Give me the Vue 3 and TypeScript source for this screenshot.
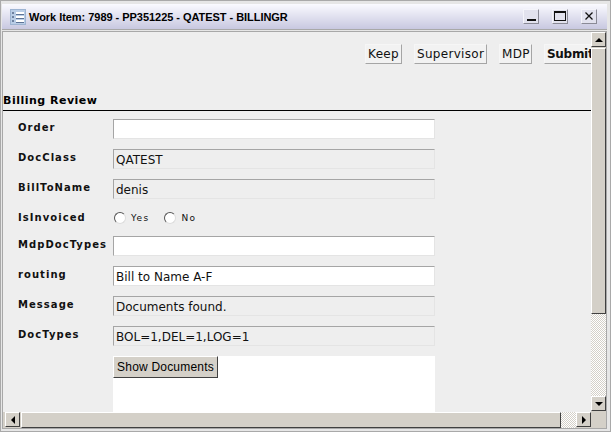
<script setup lang="ts">
// Work item window: billing review form
interface Field {
  label: string
  value?: string
  kind: 'input' | 'readonly' | 'radio'
}

const fields: Field[] = [
  { label: 'Order', value: '', kind: 'input' },
  { label: 'DocClass', value: 'QATEST', kind: 'readonly' },
  { label: 'BillToName', value: 'denis', kind: 'readonly' },
  { label: 'IsInvoiced', kind: 'radio' },
  { label: 'MdpDocTypes', value: '', kind: 'input' },
  { label: 'routing', value: 'Bill to Name A-F', kind: 'input' },
  { label: 'Message', value: 'Documents found.', kind: 'readonly' },
  { label: 'DocTypes', value: 'BOL=1,DEL=1,LOG=1', kind: 'readonly' },
]

const actions = [
  { name: 'Keep', width: 37 },
  { name: 'Supervisor', width: 73 },
  { name: 'MDP', width: 33 },
]
</script>

<template>
  <div class="window">
    <div class="titlebar">
      <svg class="app-icon" width="16" height="16" viewBox="0 0 16 16">
        <rect x="0.5" y="0.5" width="15" height="15" fill="#b9cde6" stroke="#9db4d2" />
        <path d="M2 4h2M2 8h2M2 12h2" stroke="#22365a" stroke-width="1" />
        <path d="M6 4h8M6 8h8M6 12h8" stroke="#ffffff" stroke-width="2" />
        <path d="M6 5.5h8M6 9.5h8M6 13.5h8" stroke="#5d7396" stroke-width="1" />
      </svg>
      <span class="title">Work Item: 7989 - PP351225 - QATEST - BILLINGR</span>
      <div class="win-buttons">
        <button class="win-btn">
          <svg width="14" height="13" viewBox="0 0 14 13"><rect x="3" y="9" width="9" height="2" fill="#111" /></svg>
        </button>
        <button class="win-btn">
          <svg width="14" height="13" viewBox="0 0 14 13"><rect x="1.5" y="1.5" width="11" height="9" fill="none" stroke="#111" /><rect x="1" y="1" width="12" height="2" fill="#111" /></svg>
        </button>
        <button class="win-btn">
          <svg width="14" height="13" viewBox="0 0 14 13"><path d="M3.5 2.5l7 7M10.5 2.5l-7 7" stroke="#111" stroke-width="1.3" fill="none" /></svg>
        </button>
      </div>
    </div>

    <div class="body">
      <div class="viewport">
        <div class="toolbar">
          <button v-for="a in actions" :key="a.name" class="action" :style="{ width: a.width + 'px' }">{{ a.name }}</button>
          <button class="action submit">Submit</button>
        </div>
        <h2 class="section">Billing Review</h2>
        <div class="form">
          <div v-for="f in fields" :key="f.label" class="row" :class="{ 'radio-row': f.kind === 'radio' }">
            <label class="label">{{ f.label }}</label>
            <div v-if="f.kind === 'radio'" class="radios">
              <span class="radio-item"><i class="radio"></i>Yes</span>
              <span class="radio-item"><i class="radio"></i>No</span>
            </div>
            <div v-else class="field" :class="f.kind">{{ f.value }}</div>
          </div>
          <div class="docs">
            <button class="show-docs">Show Documents</button>
          </div>
        </div>
      </div>

      <div class="vscroll">
        <button class="arrow"><span class="tri up"></span></button>
        <div class="vthumb"></div>
        <div class="track"></div>
        <button class="arrow"><span class="tri down"></span></button>
      </div>

      <div class="hscroll">
        <button class="arrow first"><span class="tri left"></span></button>
        <div class="hthumb"></div>
        <div class="track"></div>
        <button class="arrow"><span class="tri right"></span></button>
      </div>
      <div class="corner"></div>
    </div>
  </div>
</template>

<style>
html,
body {
  margin: 0;
  background: #d4d0c8;
}
</style>

<style scoped>
.window {
  width: 611px;
  height: 432px;
  box-sizing: border-box;
  padding: 3px 3px 2px 1px;
  background: #e6e6e6;
  border: 1px solid #a9a9a9;
  display: flex;
  flex-direction: column;
  overflow: hidden;
  font-family: "DejaVu Sans", sans-serif;
}

.titlebar {
  height: 26px;
  flex: none;
  display: flex;
  align-items: center;
  padding-left: 6px;
  background: linear-gradient(#fafaff, #c8c8e0);
  border-bottom: 1px solid #a8a8a8;
  box-sizing: border-box;
}

.app-icon {
  flex: none;
  margin-left: 2px;
}

.title {
  margin-left: 3px;
  font: bold 11px "Liberation Sans", sans-serif;
  letter-spacing: -0.04px;
  color: #000;
}

.win-buttons {
  margin-left: auto;
  display: flex;
  gap: 13px;
  padding-right: 10px;
}

.win-btn {
  width: 16px;
  height: 15px;
  padding: 0;
  background: #e2e2ee;
  border: 1px solid;
  border-color: #f4f4fa #8a8a96 #8a8a96 #f4f4fa;
  display: flex;
  align-items: center;
  justify-content: center;
}

.body {
  flex: 1;
  margin-top: 1px;
  min-height: 0;
  background: #eeeeee;
  border: 1px solid #a8a8a8;
  display: grid;
  grid-template-columns: 1fr 15px;
  grid-template-rows: 1fr 16px;
}

.viewport {
  overflow: hidden;
  min-width: 0;
  min-height: 0;
  background: #eeeeee;
}

.toolbar {
  display: flex;
  gap: 12px;
  width: 700px;
  padding: 12px 0 0 362px;
  box-sizing: border-box;
}

.action {
  height: 20px;
  padding: 0 2px;
  background: #f2f2f2;
  border: 1px solid;
  border-color: #f6f6f6 #a5a5a5 #a5a5a5 #f6f6f6;
  font: 12px "DejaVu Sans", sans-serif;
  letter-spacing: 0.3px;
  color: #111;
}

.submit {
  font-weight: bold;
  letter-spacing: -0.3px;
}

.section {
  margin: 28px 0 0;
  height: 19px;
  box-sizing: border-box;
  border-bottom: 1px solid #000;
  font: bold 11px "DejaVu Sans", sans-serif;
  letter-spacing: 0.5px;
  line-height: 17px;
  color: #000;
  width: 588px;
}

.form {
  padding: 8px 0 0 15px;
}

.row {
  display: flex;
  height: 20px;
  margin-bottom: 10px;
}

.radio-row {
  height: 17px;
}

.label {
  width: 95px;
  flex: none;
  font: bold 10px "DejaVu Sans", sans-serif;
  letter-spacing: 1.05px;
  line-height: 18px;
  color: #111;
}

.field {
  width: 322px;
  height: 20px;
  box-sizing: border-box;
  padding-left: 2px;
  font: 12px/21px "DejaVu Sans", sans-serif;
  color: #111;
  border: 1px solid;
  border-color: #a5a5a5 #e4e4e4 #e4e4e4 #a5a5a5;
}

.input {
  background: #fff;
}

.readonly {
  background: #eeeeee;
}

.radios {
  display: flex;
  align-items: center;
  gap: 14px;
  height: 17px;
  font: 9px "DejaVu Sans", sans-serif;
  letter-spacing: 1.3px;
  color: #111;
}

.radio-item {
  display: flex;
  align-items: center;
  gap: 5px;
  margin-left: 1px;
}

.radio {
  width: 12px;
  height: 12px;
  box-sizing: border-box;
  border-radius: 50%;
  background: #fff;
  border: 1px solid #555;
  border-right-color: #ddd;
  border-bottom-color: #ddd;
}

.docs {
  margin-left: 95px;
  width: 322px;
  height: 60px;
  background: #fff;
}

.show-docs {
  display: block;
  width: 105px;
  height: 22px;
  padding: 0;
  background: #d4d0c8;
  border: 1px solid;
  border-color: #fff #404040 #404040 #fff;
  font: 12px "Liberation Sans", sans-serif;
  letter-spacing: 0.2px;
  color: #000;
}

.vscroll,
.hscroll {
  display: flex;
  background: #d4d0c8;
}

.vscroll {
  flex-direction: column;
  padding-bottom: 1px;
  box-sizing: border-box;
}

.track {
  flex: 1;
  background: repeating-conic-gradient(#d4d0c8 0 25%, #ffffff 0 50%) 0 0 / 2px 2px;
}

.arrow {
  flex: none;
  width: 15px;
  height: 15px;
  padding: 0;
  background: #d4d0c8;
  border: 1px solid;
  border-color: #fff #404040 #404040 #fff;
  display: flex;
  align-items: center;
  justify-content: center;
}

.first {
  margin-left: 2px;
}

.vthumb {
  height: 266px;
  flex: none;
  margin-top: 1px;
  box-sizing: border-box;
  background: #d4d0c8;
  border: 1px solid;
  border-color: #fff #404040 #404040 #fff;
}

.hthumb {
  width: 540px;
  flex: none;
  margin-left: 1px;
  box-sizing: border-box;
  background: #d4d0c8;
  border: 1px solid;
  border-color: #fff #404040 #404040 #fff;
}

.tri {
  width: 0;
  height: 0;
  border-style: solid;
}

.up {
  border-width: 0 4px 4px;
  border-color: transparent transparent #000;
}

.down {
  border-width: 4px 4px 0;
  border-color: #000 transparent transparent;
}

.left {
  border-width: 4px 4px 4px 0;
  border-color: transparent #000 transparent transparent;
}

.right {
  border-width: 4px 0 4px 4px;
  border-color: transparent transparent transparent #000;
}

.corner {
  background: #d4d0c8;
}
</style>
